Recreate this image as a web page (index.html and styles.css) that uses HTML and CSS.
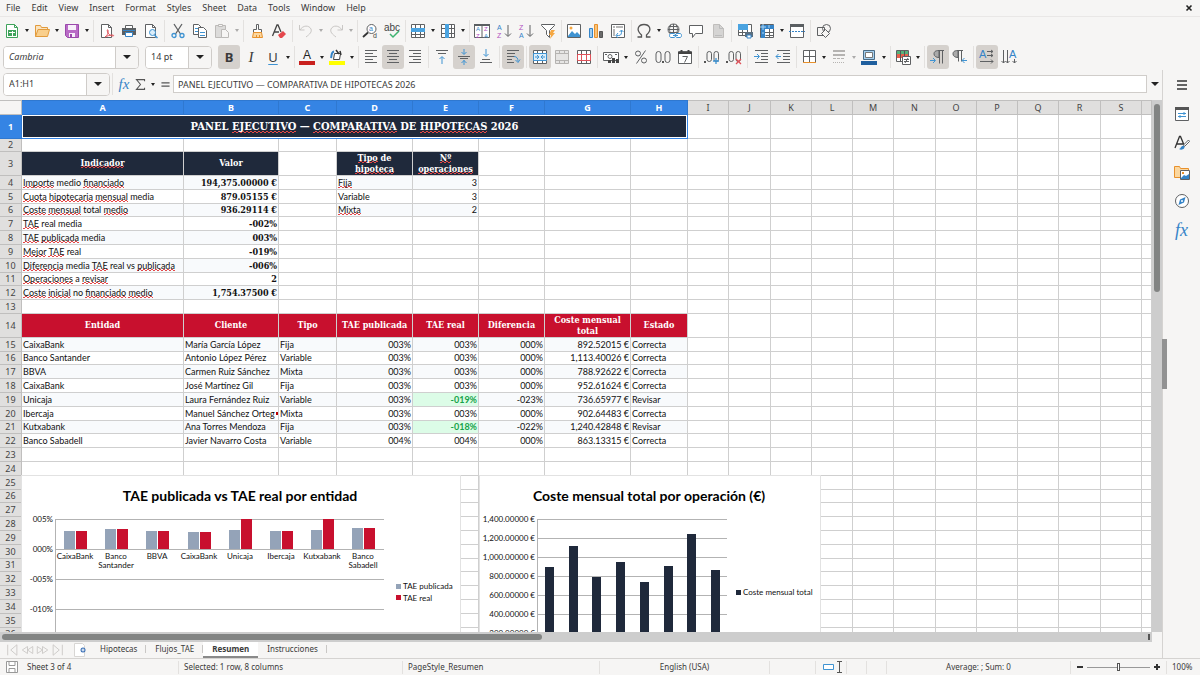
FILE: index.html
```html
<!DOCTYPE html>
<html lang="es">
<head>
<meta charset="utf-8">
<title>Resumen</title>
<link rel="stylesheet" href="styles.css">
</head>
<body>
<nav class="menubar" aria-label="Menu">
  <button>File</button><button>Edit</button><button>View</button><button>Insert</button><button>Format</button><button>Styles</button><button>Sheet</button><button>Data</button><button>Tools</button><button>Window</button><button>Help</button>
  <button class="close" aria-label="Close document"><svg viewBox="0 0 8 8"><path d="M1.5 1.5l5 5M6.5 1.5l-5 5" stroke="#222" stroke-width="1.6"/></svg></button>
</nav>

<div class="toolbar standard" role="toolbar" aria-label="Standard">
  <button class="tb" aria-label="New"><svg viewBox="0 0 16 16"><path class="gr" fill="#fff" d="M2.500 1.500h8l3 3v10h-11z"/><path class="gr" d="M10.500 1.500v3h3"/><path fill="#3fa35b" d="M4 7h8v6H4z"/><path stroke="#fff" d="M5 9.500h6M8.500 8v5"/></svg></button><button class="dd" aria-label="New options"></button>
  <button class="tb" aria-label="Open"><svg viewBox="0 0 16 16"><path fill="#fbe3bd" stroke="#e29b3c" d="M1.500 13.500v-11h5l1 2h6v3"/><path fill="#f9cf8c" stroke="#e29b3c" d="M1.500 13.500l2.500-7h11.500l-2 7z"/></svg></button><button class="dd" aria-label="Open options"></button>
  <button class="tb" aria-label="Save"><svg viewBox="0 0 16 16"><path fill="#b96bc6" stroke="#9a48ab" d="M1.500 1.500h13v13h-11l-2-2z"/><path fill="#f7effa" d="M4 2h8v5H4zM5 10h6v4H5z"/><path fill="#9a48ab" d="M6 11h2v3H6z"/></svg></button><button class="dd" aria-label="Save options"></button>
  <span class="sep"></span>
  <button class="tb" aria-label="Export as PDF"><svg viewBox="0 0 16 16"><path class="k" fill="#fff" d="M2.500 1.500h7l3 3v10h-10z"/><path class="k" d="M9.500 1.500v3h3"/><path class="r" d="M6 14c3-2 3.500-5 3-7-1-1-1 1 0 3 1 2 3 3 5 3 1 0 1-1-1-1-2 0-5 1-7 2"/></svg></button>
  <button class="tb" aria-label="Print"><svg viewBox="0 0 16 16"><path class="k" fill="#fff" d="M4.500 5V2.500h7V5"/><path fill="#5b5f62" d="M1 5h14v7H1z"/><path fill="#fff" stroke="#3584c8" d="M4.500 9.500h7v4h-7z"/><path stroke="#3584c8" d="M2 7.500h12"/></svg></button>
  <button class="tb" aria-label="Print preview"><svg viewBox="0 0 16 16"><path class="k" fill="#fff" d="M2.500 1.500h7l3 3v10h-10z"/><path class="k" d="M9.500 1.500v3h3"/><circle class="b" fill="#dceefa" cx="9.500" cy="9.500" r="3"/><path class="b" stroke-width="1.500" d="M11.500 12l3 3"/></svg></button>
  <span class="sep"></span>
  <button class="tb" aria-label="Cut"><svg viewBox="0 0 16 16"><path class="k" stroke-width="1.300" d="M4 1l6.500 10M12 1L5.500 11"/><circle class="b" stroke-width="1.300" cx="4" cy="12.500" r="2"/><circle class="b" stroke-width="1.300" cx="12" cy="12.500" r="2"/></svg></button>
  <button class="tb" aria-label="Copy"><svg viewBox="0 0 16 16"><path class="k" fill="#fff" d="M1.500 1.500h5l3 3v7h-8z"/><path class="k" fill="#fff" d="M6.500 4.500h5l3 3v7h-8z"/><path class="b" d="M3 5.500h3M3 8.500h3M8 9.500h5M8 12.500h5"/></svg></button>
  <button class="tb" aria-label="Paste"><svg viewBox="0 0 16 16"><path fill="#dcdbda" stroke="#bcbab8" d="M1.500 2.500h10v12h-10z"/><path fill="#f6f5f4" stroke="#bcbab8" d="M4.500 1.500h4v2h-4zM7.500 6.500h4l3 3v5h-7z"/></svg></button><button class="dd off" aria-label="Paste options"></button>
  <span class="sep"></span>
  <button class="tb" aria-label="Clone formatting"><svg viewBox="0 0 16 16"><path class="k" fill="#fff" d="M7.500 1.500h2v5h3v3h-8v-3h3z"/><path fill="#fbd79f" stroke="#e8912c" d="M4.500 9.500h8l1 5h-10z"/><path stroke="#e8912c" d="M7.500 12v2M10.500 12v2"/></svg></button>
  <button class="tb" aria-label="Clear formatting"><svg viewBox="0 0 16 16"><path stroke="#444" stroke-width="1.300" d="M1.500 13L6 2h1l3 7M3 9h5"/><path fill="#e5484d" d="M7 12l5-4 3 3-4 4H9z"/></svg></button>
  <span class="sep"></span>
  <button class="tb" aria-label="Undo"><svg viewBox="0 0 16 16"><path class="g" d="M1.500 2v5h5M2 7c3-5 9-5 11-1 1 3-1 5-5 8"/></svg></button><button class="dd off" aria-label="Undo list"></button>
  <button class="tb" aria-label="Redo"><svg viewBox="0 0 16 16"><path class="g" d="M14.500 2v5h-5M14 7C11 2 5 2 3 6c-1 3 1 5 5 8"/></svg></button><button class="dd off" aria-label="Redo list"></button>
  <span class="sep tight"></span>
  <button class="tb" aria-label="Find and replace"><svg viewBox="0 0 16 16"><circle class="k" fill="#fff" cx="9.500" cy="6" r="4.500"/><path stroke="#333" stroke-width="1.800" d="M1 14l5-4.500"/><text x="7" y="8" class="tx blue" font-size="7">a</text><text x="11" y="15" class="tx" font-size="7">d</text></svg></button>
  <button class="tb" aria-label="Spelling"><svg viewBox="0 0 16 16"><text x="0" y="8" class="tx" font-size="10">abc</text><path stroke="#3db370" stroke-width="1.500" d="M6 11l3 3 6-6"/></svg></button>
  <span class="sep tight"></span>
  <button class="tb" aria-label="Row"><svg viewBox="0 0 16 16"><path class="k" fill="#fff" d="M1.500 1.500h13v13h-13zM1.500 11.500h13M5.500 1.500v13M10.500 1.500v13"/><path fill="#4aa3e0" d="M1 5h14v4H1z"/></svg></button><button class="dd" aria-label="Row options"></button>
  <button class="tb" aria-label="Column"><svg viewBox="0 0 16 16"><path class="k" fill="#fff" d="M1.500 1.500h13v13h-13zM11.500 1.500v13M1.500 5.500h13M1.500 10.500h13"/><path fill="#4aa3e0" d="M5 1h4v14H5z"/></svg></button><button class="dd" aria-label="Column options"></button>
  <span class="sep tight"></span>
  <button class="tb" aria-label="Sort"><svg viewBox="0 0 16 16"><path class="k" fill="#fff" d="M.5 1.500h15v13H.5zM8 2v12"/><path fill="#5b5f62" d="M0 1h16v2H0z"/><text x="2" y="8" class="tx blue" font-size="6">A</text><text x="2" y="15" class="tx purple" font-size="6">Z</text><text x="10" y="8" class="tx purple" font-size="6">Z</text><text x="10" y="15" class="tx blue" font-size="6">A</text></svg></button>
  <button class="tb" aria-label="Sort ascending"><svg viewBox="0 0 16 16"><text x="1" y="7" class="tx blue" font-size="7">A</text><text x="1" y="15" class="tx purple" font-size="7">Z</text><path class="k" d="M12 2v11M9 10.500l3 3 3-3"/></svg></button>
  <button class="tb" aria-label="Sort descending"><svg viewBox="0 0 16 16"><text x="1" y="7" class="tx purple" font-size="7">Z</text><text x="1" y="15" class="tx blue" font-size="7">A</text><path class="k" d="M12 2v11M9 10.500l3 3 3-3"/></svg></button>
  <button class="tb" aria-label="AutoFilter"><svg viewBox="0 0 16 16"><path class="k" fill="#fff" d="M1.500 1.500h13v1l-5 5v7l-3-3v-4l-5-5z"/><path fill="#f5a742" d="M11 7h4l-2 3h2l-5 6 1-4H9z"/></svg></button>
  <span class="sep tight"></span>
  <button class="tb" aria-label="Insert image"><svg viewBox="0 0 16 16"><path class="k" fill="#fff" d="M1.500 1.500h13v13h-13z"/><path fill="#3f93d2" d="M2 13l4-5 3 3 2-2 3 3v2H2z"/><circle fill="#f5a742" cx="5" cy="5" r="1.500"/></svg></button>
  <button class="tb" aria-label="Insert chart"><svg viewBox="0 0 16 16"><path fill="#9fcdf0" stroke="#3584c8" d="M1.500 5.500h3v9h-3z"/><path fill="#f8c37a" stroke="#e8912c" d="M6.500 1.500h3v13h-3z"/><path fill="#6b6b6b" stroke="#555" d="M11.500 8.500h3v6h-3z"/></svg></button>
  <button class="tb" aria-label="Pivot table"><svg viewBox="0 0 16 16"><path class="k" fill="#fff" d="M1.500 1.500h13v13h-13z"/><path fill="#b7b7b7" d="M3 3h2v2H3zM6 3h7v2H6zM3 6h2v7H3z"/><path class="b" d="M6.500 12.500h2c3 0 3-2 3-5M9.500 9l2-2 2 2M8 10l-2 2.500L8 15"/></svg></button>
  <span class="sep tight"></span>
  <button class="tb" aria-label="Special character"><svg viewBox="0 0 16 16"><path stroke="#555" stroke-width="1.300" d="M1.500 14h4v-2C-1 6 3 1.500 8 1.500s9 4.500 2.500 10.500v2h4"/></svg></button><button class="dd" aria-label="Special character options"></button>
  <button class="tb" aria-label="Insert hyperlink"><svg viewBox="0 0 16 16"><circle class="k" cx="7.500" cy="6.500" r="5.500"/><path class="k" d="M2 6.500h11M7.500 1v11M3 3.500h9M3 9.500h9M5 1.500c-2 4-2 6 0 10M10 1.500c2 4 2 6 0 10"/><path class="b" fill="#fff" d="M5 10.500h3c2 0 2 4 0 4H5c-2 0-2-4 0-4zM11 10.500h3c2 0 2 4 0 4h-3c-2 0-2-4 0-4zM7 12.500h5"/></svg></button>
  <button class="tb" aria-label="Insert comment"><svg viewBox="0 0 16 16"><path class="k" fill="#fff" d="M1.500 2.500h13v8h-7l-3 4v-4h-3z"/></svg></button>
  <button class="tb" aria-label="Headers and footers"><svg viewBox="0 0 16 16"><path fill="#d5d4d3" stroke="#c0bebc" d="M3.500 1.500h6l4 4v9h-10z"/><path stroke="#bbb" d="M5 12.500h7M9.500 1.500v4h4"/></svg></button>
  <span class="sep"></span>
  <button class="tb" aria-label="Define print area"><svg viewBox="0 0 16 16"><path class="k" fill="#fff" d="M1.500 1.500h13v11h-13zM1.500 9.500h13M5.500 1.500v11M10.500 1.500v11"/><path fill="#4aa3e0" d="M1 1h10v6H1z"/><path fill="#5b6f80" d="M8 9h8v5H8z"/><path fill="#fff" stroke="#3584c8" d="M10 12h4v3h-4z"/></svg></button>
  <button class="tb" aria-label="Freeze rows and columns"><svg viewBox="0 0 16 16"><path class="k" fill="#fff" d="M1.500 1.500h13v13h-13zM1.500 9.500h13M10.500 1.500v13M6.500 12.500h8"/><path fill="#3584c8" d="M2 2h13v4H6v9H2z"/><path stroke="#a8d3f3" d="M4 1v6M1 4h6M10 2v3M3 10h2"/></svg></button><button class="dd" aria-label="Freeze options"></button>
  <button class="tb" aria-label="Split window"><svg viewBox="0 0 16 16"><path class="k" fill="#fff" d="M1.500 1.500h13v13h-13z"/><path fill="#5b5f62" d="M1 1h14v3H1z"/><path stroke="#3584c8" stroke-dasharray="2 1" d="M0 8.500h16"/></svg></button>
  <span class="sep"></span>
  <button class="tb" aria-label="Show draw functions"><svg viewBox="0 0 16 16"><path class="k" d="M1.500 4.500h7v8h-7z"/><circle class="k" cx="10.500" cy="5.500" r="4"/><path class="k" fill="#f6f5f4" d="M9.500 6.500l4 4-4 4-4-4z"/></svg></button>
</div>

<div class="toolbar formatting" role="toolbar" aria-label="Formatting">
  <div class="combo fontname"><input aria-label="Font name" value="Cambria"><button aria-label="Font list"></button></div>
  <div class="combo fontsize"><input aria-label="Font size" value="14 pt"><button aria-label="Font size list"></button></div>
  <button class="tb on letter bold" aria-label="Bold">B</button>
  <button class="tb letter ital" aria-label="Italic">I</button>
  <button class="tb letter under" aria-label="Underline">U</button><button class="dd" aria-label="Underline options"></button>
  <span class="sep tight"></span>
  <button class="tb" aria-label="Font color"><svg viewBox="0 0 16 16"><text x="4" y="10" class="tx dark" font-size="12">A</text><path fill="#c9211e" d="M0 12h16v4H0z"/></svg></button><button class="dd" aria-label="Font color options"></button>
  <button class="tb" aria-label="Highlighting"><svg viewBox="0 0 16 16"><path fill="#ff0" d="M0 12h16v4H0z"/><path stroke="#444" fill="#fff" d="M5.500 4.500h6l-1 6h-6z"/><path stroke="#333" stroke-width="1.500" d="M7 1l3 4M11 2l1 4"/><path stroke="#3584c8" stroke-width="2" d="M5 2.500C2 3 3 6 2 9"/></svg></button><button class="dd" aria-label="Highlighting options"></button>
  <span class="sep tight"></span>
  <button class="tb" aria-label="Align left"><svg viewBox="0 0 16 16"><path class="k" d="M2 1.500h12M2 4.500h8M2 7.500h12M2 10.500h8M2 13.500h12"/></svg></button>
  <button class="tb on" aria-label="Center"><svg viewBox="0 0 16 16"><path class="k" d="M2 1.500h12M4 4.500h8M2 7.500h12M4 10.500h8M2 13.500h12"/></svg></button>
  <button class="tb" aria-label="Align right"><svg viewBox="0 0 16 16"><path class="k" d="M2 1.500h12M6 4.500h8M2 7.500h12M6 10.500h8M2 13.500h12"/></svg></button>
  <span class="sep"></span>
  <button class="tb" aria-label="Align top"><svg viewBox="0 0 16 16"><path class="k" d="M2 1.500h12M4 4.500h8"/><path class="b" d="M8 15V8M5.500 10L8 7.500l2.500 2.500"/></svg></button>
  <button class="tb on" aria-label="Center vertically"><svg viewBox="0 0 16 16"><path class="k" d="M2 7.500h12M4 9.500h8"/><path class="b" d="M8 0v5M5.500 3L8 5.500 10.500 3M8 16v-5M5.500 14L8 11.500l2.500 2.500"/></svg></button>
  <button class="tb" aria-label="Align bottom"><svg viewBox="0 0 16 16"><path class="k" d="M4 10.500h8M2 13.500h12"/><path class="b" d="M8 0v7M5.500 5L8 7.500 10.500 5"/></svg></button>
  <span class="sep"></span>
  <button class="tb on" aria-label="Wrap text"><svg viewBox="0 0 16 16"><path class="k" d="M2 1.500h12M2 4.500h8M2 7.500h8M2 10.500h5M2 13.500h7"/><path class="b" d="M9 7.500c3 0 4 2 4 5M10.500 11l2.500 2.500 2-3"/></svg></button>
  <span class="sep"></span>
  <button class="tb on" aria-label="Merge and center"><svg viewBox="0 0 16 16"><path class="k" fill="#fff" d="M1.500 1.500h13v13h-13zM5.500 1.500v3M10.500 1.500v3M5.500 11.500v3M10.500 11.500v3"/><path class="b" fill="#dceefa" d="M1.500 4.500h13v7h-13z"/><path class="b" d="M3 8h4M9 8h4M5 6l2 2-2 2M11 6L9 8l2 2"/></svg></button>
  <button class="tb" aria-label="Merge cells"><svg viewBox="0 0 16 16"><path stroke="#b5b3b1" fill="#e6e5e4" d="M1.500 1.500h13v13h-13zM1.500 4.500h13M1.500 11.500h13M5.500 1.500v3M10.500 1.500v3M5.500 11.500v3M10.500 11.500v3"/></svg></button>
  <button class="tb" aria-label="Unmerge cells"><svg viewBox="0 0 16 16"><path class="k" fill="#fff" d="M1.500 1.500h13v13h-13zM5.500 1.500v13M10.500 1.500v13"/><path class="r" d="M1.500 5.500h13v6h-13zM5.500 5.500v6M10.500 5.500v6"/></svg></button>
  <span class="sep"></span>
  <button class="tb" aria-label="Format as currency"><svg viewBox="0 0 16 16"><path class="k" fill="#fff" d="M.5 3.500h15v8H.5z"/><circle class="k" cx="7" cy="7.500" r="2"/><path fill="#444" d="M5 11h3v3H5zM9 9h3v5H9zM13 10h3v4h-3z"/><path class="k" d="M2 5.500h2M12 5.500h2"/></svg></button><button class="dd" aria-label="Currency options"></button>
  <button class="tb" aria-label="Format as percent"><svg viewBox="0 0 16 16"><circle class="k" cx="5" cy="4.500" r="2.500"/><circle class="k" cx="11" cy="11.500" r="2.500"/><path class="k" d="M12.500 1.500l-9 13"/></svg></button>
  <button class="tb" aria-label="Format as number"><svg viewBox="0 0 16 16"><rect class="k" x="1" y="2.500" width="5" height="11" rx="2.500"/><rect class="k" x="10" y="2.500" width="5" height="11" rx="2.500"/><path fill="#555" d="M7 12h2v2H7z"/></svg></button>
  <button class="tb" aria-label="Format as date"><svg viewBox="0 0 16 16"><path class="k" fill="#fff" d="M1.500 2.500h13v12h-13z"/><path stroke="#444" stroke-width="2" d="M1 4h14M4.500 1v2M11.500 1v2"/><path class="k" d="M5.500 7.500h5l-3 6"/></svg></button>
  <span class="sep"></span>
  <button class="tb" aria-label="Add decimal place"><svg viewBox="0 0 16 16"><rect class="k" x="3" y="2.500" width="4.500" height="10" rx="2.200"/><rect class="k" x="10" y="2.500" width="4.500" height="10" rx="2.200"/><path fill="#555" d="M0 12h2v2H0z"/><path class="b" stroke-width="1.300" d="M12 9v6M9 12h6"/></svg></button>
  <button class="tb" aria-label="Delete decimal place"><svg viewBox="0 0 16 16"><rect class="k" x="3" y="2.500" width="4.500" height="10" rx="2.200"/><rect class="k" x="10" y="2.500" width="4.500" height="10" rx="2.200"/><path fill="#555" d="M0 12h2v2H0z"/><path class="r" stroke-width="1.300" d="M10 10l5 5M15 10l-5 5"/></svg></button>
  <span class="sep"></span>
  <button class="tb" aria-label="Increase indent"><svg viewBox="0 0 16 16"><path class="k" d="M2 1.500h13M8 4.500h7M8 7.500h7M8 10.500h7M2 13.500h13"/><path class="b" d="M1 7.500h5M4 5l2.500 2.500L4 10"/></svg></button>
  <button class="tb" aria-label="Decrease indent"><svg viewBox="0 0 16 16"><path class="k" d="M2 1.500h13M8 4.500h7M8 7.500h7M8 10.500h7M2 13.500h13"/><path class="b" d="M1 7.500h5M3.500 5L1 7.500 3.500 10"/></svg></button>
  <span class="sep tight"></span>
  <button class="tb" aria-label="Borders"><svg viewBox="0 0 16 16"><path class="k" fill="#fff" d="M2.500 1.500h12v12h-12zM8.500 1.500v12M2.500 7.500h12"/><path stroke="#e8912c" d="M2 13.500h13"/></svg></button><button class="dd" aria-label="Borders options"></button>
  <button class="tb" aria-label="Border style"><svg viewBox="0 0 16 16"><path stroke="#b5b3b1" stroke-width="2" d="M2 2h12M2 6h12"/><path stroke="#b5b3b1" d="M2 9.500h12" stroke-dasharray="3 1"/><path stroke="#b5b3b1" d="M2 13.500h12" stroke-dasharray="1 1"/></svg></button><button class="dd off" aria-label="Border style options"></button>
  <button class="tb" aria-label="Border color"><svg viewBox="0 0 16 16"><path fill="#a5d0f0" stroke="#4a6b85" d="M2.500 1.500h11v9h-11z"/><path fill="#fff" stroke="#777" d="M4.500 3.500h7v5h-7z"/><path fill="#1f5f9e" d="M0 12h16v4H0z"/></svg></button><button class="dd" aria-label="Border color options"></button>
  <span class="sep tight"></span>
  <button class="tb" aria-label="Conditional formatting"><svg viewBox="0 0 16 16"><path class="k" fill="#fff" d="M1.500 1.500h12v11h-12z"/><path fill="#55b37a" d="M2 2h11v3H2z"/><path fill="#e8604c" d="M2 5h11v4H2z"/><path stroke="#555" d="M5.500 2v10M9.500 2v10"/><path class="k" fill="#fff" d="M7.500 7.500h8v8h-8z"/><path class="k" d="M9 10.500h5M9 12.500h5M13 9l-3 5"/></svg></button><button class="dd" aria-label="Conditional formatting options"></button>
  <span class="sep"></span>
  <button class="tb on" aria-label="Left to right"><svg viewBox="0 0 16 16"><path class="k" fill="#aaa" d="M9 1.500C5 1.500 4 3 4 5s2 3.500 5 3.500z"/><path class="k" d="M9 1.500h5M9.500 1.500v13M12.500 1.500v13"/><path class="b" d="M0 11.500h5M3 9l2.500 2.500L3 14"/></svg></button>
  <button class="tb" aria-label="Right to left"><svg viewBox="0 0 16 16"><path class="k" fill="#aaa" d="M6 1.500C2 1.500 1 3 1 5s2 3.500 5 3.500z"/><path class="k" d="M6 1.500h5M6.500 1.500v11M9.500 1.500v11"/><path class="b" d="M10 11.500h5M12.500 9L10 11.500l2.500 2.500"/></svg></button>
  <span class="sep"></span>
  <button class="tb on" aria-label="Text direction horizontal"><svg viewBox="0 0 16 16"><text x="0" y="9" class="tx blue" font-size="11">A</text><path class="k" d="M8 2.500h6M12 1l2 1.500L12 4M8 6.500h6M12 5l2 1.500L12 8M1 12.500h13M12 10.500l2 2-2 2"/></svg></button>
  <button class="tb" aria-label="Text direction vertical"><svg viewBox="0 0 16 16"><text x="8" y="9" class="tx blue" font-size="11">A</text><path class="k" d="M2.500 1v13M.5 12l2 2 2-2M6.500 1v13M4.500 12l2 2 2-2M13.500 10v4M11.500 12l2 2 2-2"/></svg></button>
</div>

<main class="work">
  <section class="doc">
    <div class="formulabar">
      <div class="combo namebox"><input aria-label="Name box" value="A1:H1"><button aria-label="Name list"></button></div>
      <span class="sep"></span>
      <button class="fb fx" aria-label="Function wizard">fx</button>
      <button class="fb" aria-label="Sum"><svg viewBox="0 0 16 16"><path stroke="#555" stroke-width="1.300" d="M13 4V2H3l5 6-5 6h10v-2"/></svg></button><button class="dd" aria-label="Sum options"></button>
      <button class="fb" aria-label="Formula"><svg viewBox="0 0 16 16"><path stroke="#555" stroke-width="1.500" d="M3 6h10M3 10h10"/></svg></button>
      <input class="formula" aria-label="Formula input" value="PANEL EJECUTIVO — COMPARATIVA DE HIPOTECAS 2026">
      <button class="expand" aria-label="Expand formula bar"></button>
    </div>
    <div class="gridwrap">
      <div class="sheet">
        <table id="grid"></table>
        <svg class="chart first" id="chartTae" width="438" height="320"></svg>
        <svg class="chart second" id="chartCoste" width="340" height="320"></svg>
      </div>
      <div class="vscroll"><div class="thumb"></div></div>
    </div>
    <div class="hscroll"><div class="thumb"></div><div class="endmark"></div></div>
    <div class="tabs">
      <div class="tabnav">
        <button aria-label="First sheet"><svg viewBox="0 0 16 16"><path class="g" d="M2.500 2v12M13 2L6 8l7 6V2z"/></svg></button>
        <button aria-label="Previous sheet"><svg viewBox="0 0 16 16"><path class="g" d="M8 4L2 8l6 4V4zM14 4L8 8l6 4V4z"/></svg></button>
        <button aria-label="Next sheet"><svg viewBox="0 0 16 16"><path class="g" d="M2 4l6 4-6 4V4zM8 4l6 4-6 4V4z"/></svg></button>
        <button aria-label="Last sheet"><svg viewBox="0 0 16 16"><path class="g" d="M13.500 2v12M3 2l7 6-7 6V2z"/></svg></button>
      </div>
      <button class="addtab" aria-label="Add sheet"><svg viewBox="0 0 14 14"><path fill="#fff" stroke="#d8d6d4" d="M1.500.5h8l2 2v11h-10z"/><circle cx="10" cy="7" r="2.500" fill="#3a6fb5"/><path stroke="#fff" d="M10 5.500v3M8.500 7h3"/></svg></button>
      <button class="tab">Hipotecas</button><button class="tab">Flujos_TAE</button><button class="tab active">Resumen</button><button class="tab">Instrucciones</button>
    </div>
  </section>
  <aside class="sidebar">
    <button aria-label="Sidebar settings"><svg viewBox="0 0 16 16"><path stroke="#333" stroke-width="1.500" d="M3 4h10M3 8h10M3 12h10"/></svg></button>
    <button aria-label="Properties"><svg viewBox="0 0 16 16"><path class="k" fill="#fff" d="M1.500 1.500h13v13h-13z"/><path fill="#555" d="M1 1h14v3H1z"/><path class="b" d="M4 7.500h8M4 10.500h8M10 6v3M6 9v3"/></svg></button>
    <button aria-label="Styles"><svg viewBox="0 0 16 16"><path stroke="#333" stroke-width="1.300" d="M1 13L5.500 1.500h1L10 10M2.500 9H9"/><path class="k" fill="#fff" d="M14.500 5l-5 5 1 1.500 5-5z"/><path fill="#3584c8" d="M5 14c2 0 2-4 5-3 2 2-2 5-5 3z"/></svg></button>
    <button aria-label="Gallery"><svg viewBox="0 0 16 16"><path fill="#fbd79f" stroke="#e8912c" d="M.5 13.500v-11h5l1 2h8v9z"/><path class="k" fill="#fff" d="M6.500 6.500h9v9h-9z"/><path fill="#3584c8" d="M7 14l3-3 2 1 3-2v5H7z"/><path fill="#e8912c" d="M8 8h2v2H8z"/></svg></button>
    <button aria-label="Navigator"><svg viewBox="0 0 16 16"><circle class="k" fill="#fff" cx="8" cy="8" r="6.500"/><path fill="#3584c8" d="M11.500 4L10 9.500 4.500 12 6 6.500z"/><circle fill="#fff" cx="8" cy="8" r="1"/></svg></button>
    <button class="fx" aria-label="Functions">fx</button>
    <span class="grip"></span>
  </aside>
</main>

<footer class="status">
  <span class="saveicon"><svg viewBox="0 0 14 14"><path stroke="#999" fill="#fff" d="M1.500 1.500h11v11h-11zM4 1.500h6v4H4zM4 8.500h6v4H4z"/></svg></span>
  <span>Sheet 3 of 4</span>
  <span>Selected: 1 row, 8 columns</span>
  <span>PageStyle_Resumen</span>
  <span class="mid">English (USA)</span>
  <span></span>
  <span class="mode"><svg viewBox="0 0 22 14"><path stroke="#3f93d2" fill="#fff" d="M2.500 4.500h10v5h-10z"/><path stroke="#555" d="M16 1.500h5M16 12.500h5M18.500 1.500v11"/></svg></span>
  <span></span><span></span>
  <span class="mid">Average: ; Sum: 0</span>
  <span class="zoom"><button aria-label="Zoom out"><i class="bar"></i></button><input type="range" min="0" max="100" value="50" aria-label="Zoom"><button aria-label="Zoom in"><i class="bar"></i><i class="bar up"></i></button></span>
  <span class="pct">100%</span>
</footer>
<script src="sheet.js"></script>
</body>
</html>
```

FILE: styles.css
```css
* { box-sizing: border-box; }
body {
  margin: 0;
  height: 100vh;
  display: flex;
  flex-direction: column;
  overflow: hidden;
  background: #f6f5f4;
  color: #3a3a3a;
  font: 9px/12px "Noto Sans", "Open Sans", sans-serif;
}
button { border: 0; padding: 0; margin: 0; background: none; font: inherit; color: inherit; }
input { font: inherit; color: inherit; border: 0; margin: 0; min-width: 0; outline: 0; }
svg { display: block; fill: none; overflow: visible; }
.k { stroke: #5f6163; }
.b { stroke: #3f93d2; }
.r { stroke: #e0525a; }
.gr { stroke: #3fa35b; }
.g { stroke: #c9c7c5; }
.tx { font-family: "Liberation Sans", sans-serif; fill: #444; }
.dark { fill: #222; }
.blue { fill: #3584c8; }
.purple { fill: #b14fc0; }

.menubar { display: flex; align-items: center; height: 17px; padding-left: 6px; gap: 11px; border-bottom: 1px solid #e9e7e6; flex: none; }
.close { margin-left: auto; margin-right: 7px; width: 8px; }

.toolbar { display: flex; align-items: center; flex: none; }
.standard { padding-left: 1px; height: 27px; }
.formatting { padding-left: 3px; height: 26px; }
.tb { width: 22px; height: 24px; display: flex; align-items: center; justify-content: center; border-radius: 3px; flex: none; }
.tb svg { width: 16px; height: 16px; }
.on { background: #d5d1cd; }
.dd { width: 8px; height: 24px; display: flex; align-items: center; justify-content: center; flex: none; }
.dd::after, .combo button::after, .expand::after { content: ""; border: 2px solid transparent; border-top: 3px solid #222; border-bottom: 0; }
.combo button::after, .expand::after { border-width: 4px 4px 0; }
.off { opacity: .35; }
.sep { width: 1px; height: 22px; margin: 0 2px; background: #e3e1df; flex: none; }
.tight { margin-right: 1px; }
.letter { font-size: 13px; line-height: 16px; }
.bold { font-weight: 700; }
.ital { font-family: "Liberation Serif", serif; font-style: italic; font-size: 15px; }
.under { text-decoration: underline; text-decoration-color: #3f93d2; text-underline-offset: 2px; }

.combo { display: flex; height: 23px; border: 1px solid #cfccc9; border-radius: 4px; background: #fff; overflow: hidden; flex: none; }
.combo input { flex: 1; width: 0; padding: 0 5px; background: #fff; }
.combo button { width: 23px; display: flex; align-items: center; justify-content: center; background: #f6f5f4; border-left: 1px solid #cfccc9; }
.fontname { width: 136px; margin-right: 6px; }
.fontname input { font-style: italic; }
.fontsize { width: 67px; margin-right: 6px; }
.namebox { width: 107px; }

.work { flex: 1; min-height: 0; display: flex; }
.doc { flex: 1; min-width: 0; display: flex; flex-direction: column; }
.formulabar { display: flex; align-items: center; height: 30px; padding: 0 0 2px 3px; flex: none; }
.fb { width: 15px; display: flex; align-items: center; justify-content: center; flex: none; }
.fb svg { width: 13px; height: 13px; }
.fx { font: italic 15px/16px "Liberation Serif", serif; color: #3584c8; }
.formulabar .fx { width: 18px; }
.formulabar .dd { width: 10px; }
.formula { flex: 1; height: 18px; border: 1px solid #d0cdca; background: #fff; padding: 0 4px; }
.expand { width: 15px; display: flex; justify-content: center; }

.gridwrap { flex: 1; min-height: 0; display: flex; }
.sheet { position: relative; flex: 1; min-width: 0; overflow: hidden; background: #fff; }
table { width: 100%; table-layout: fixed; border-collapse: separate; border-spacing: 0; font-family: Lato, sans-serif; color: #111; }
td, th { padding: 0 1px; border-right: 1px solid #cfcfcf; border-bottom: 1px solid #cfcfcf; line-height: 12px; height: 14px; white-space: nowrap; overflow: hidden; font-weight: 400; text-align: left; }
.short td, .short th { height: 13px; }
.tall td, .tall th { height: 24px; }
thead th, tbody th { background: #e0dfde; text-align: center; color: #444; font-family: "Noto Sans", sans-serif; border-color: #c0bfbe; }
thead th { border-top: 1px solid #c0bfbe; height: 15px; }
thead th.corner { background: #f6f5f4; }
thead th.sel, tbody th.sel { background: #3584e4; color: #fff; font-weight: 700; border-color: #2f78d0; }
td.title { background: #1f293b; color: #fff; text-align: center; font-family: "DejaVu Serif Condensed", "DejaVu Serif", serif; font-weight: 700; font-size: 11px; border-color: #3584e4; box-shadow: inset 0 0 0 1px #fff; }
td.navy, td.red { color: #fff; text-align: center; white-space: normal; line-height: 11px; font-family: "DejaVu Serif Condensed", "DejaVu Serif", serif; font-weight: 700; font-size: 9px; }
td.navy { background: #1f293b; }
td.red { background: #c8102e; }
td.band { background: #f8fafc; }
td.num { text-align: right; }
td.key { font-family: "DejaVu Serif Condensed", "DejaVu Serif", serif; font-weight: 700; font-size: 9px; }
td.good { background: #dcfce7; color: #16a34a; font-weight: 700; }
td.more { background-image: linear-gradient(#b00, #b00); background-size: 2px 3px; background-position: right center; background-repeat: no-repeat; }
/* two interleaved rows of dashes draw the spell-check wave */
.sp {
  background-image: linear-gradient(90deg, #e54848 50%, transparent 50%), linear-gradient(90deg, transparent 50%, #e54848 50%);
  background-size: 4px 1px, 4px 1px;
  background-position: left bottom, left bottom 1px;
  background-repeat: repeat-x;
}

.chart { position: absolute; top: 376px; background: #fff; outline: 1px solid #e2e2e2; font-family: Lato, sans-serif; font-size: 8px; }
.chart text { fill: #111; }
.chart .heading { font-size: 14px; font-weight: 700; fill: #000; }
.first { left: 22px; }
.second { left: 480px; }

.vscroll { width: 10px; background: #cdcdcd; padding: 4px 2px; flex: none; }
.vscroll .thumb { height: 188px; border-radius: 3px; background: #828483; }
.hscroll { height: 10px; margin-right: 10px; background: #cdcdcd; padding: 2px; display: flex; flex: none; }
.hscroll .thumb { width: 47%; height: 6px; border-radius: 3px; background: #828483; }
.endmark { width: 2px; margin-left: auto; background: #555; }

.tabs { display: flex; align-items: center; height: 16px; flex: none; font-size: 8px; }
.tabnav { display: flex; padding-left: 5px; width: 73px; }
.tabnav svg { width: 15px; height: 14px; }
.addtab { width: 18px; }
.addtab svg { width: 14px; height: 14px; }
.tab { height: 16px; padding: 0 9px; border-bottom: 2px solid transparent; }
.tab:not(.active) { background: linear-gradient(#c9c7c5, #c9c7c5) right center / 1px 8px no-repeat; }
.tab.active { background: #fff; font-weight: 700; border-bottom-color: #8a8a8a; }

.sidebar { width: 38px; border-left: 1px solid #d5d3d1; display: flex; flex-direction: column; align-items: center; gap: 13px; padding-top: 7px; position: relative; flex: none; }
.sidebar svg { width: 16px; height: 16px; }
.sidebar .fx { font-size: 18px; }
.grip { position: absolute; left: -1px; top: 269px; width: 5px; height: 50px; background: #929292; }

.status { display: grid; grid-template-columns: 22px 157fr 224fr 197fr 170fr 46px 31px 20px 20px 184fr 96px 33px; align-items: center; height: 17px; border-top: 1px solid #d5d3d1; flex: none; font-size: 8px; }
.status > span { height: 13px; padding: 0 5px; border-right: 1px solid #e3e1df; display: flex; align-items: center; white-space: nowrap; }
.status > .saveicon, .status > .pct { border: 0; }
.status > .mid { justify-content: center; }
.mode svg { width: 22px; height: 14px; }
.saveicon svg { width: 14px; height: 14px; flex: none; }
.zoom button { width: 8px; height: 12px; position: relative; flex: none; }
.zoom .bar { position: absolute; left: 1px; top: 5px; width: 6px; height: 2px; background: #333; }
.zoom .up { transform: rotate(90deg); }
.zoom input { appearance: none; flex: 1; width: 0; height: 12px; margin: 0 3px; background: linear-gradient(#999, #999) center / 100% 1px no-repeat; }
.zoom input::-webkit-slider-thumb { appearance: none; width: 3px; height: 8px; border: 1px solid #555; background: #fff; }
```

FILE: sheet.js
```js
const widths = [22, 162, 95, 58, 76, 66, 66, 86, 57, 41, 42, 41, 41, 41, 42, 41, 41, 41, 42, 41];
const letters = 'ABCDEFGHIJKLMNOPQRS'.split('');
const cells = {};
const set = (ref, html, cls = '') => { cells[ref] = { html, cls }; };

set('A3', '[Indicador]', 'navy');
set('B3', 'Valor', 'navy');
set('D3', '[Tipo] de [hipoteca]', 'navy');
set('E3', '[Nº] [operaciones]', 'navy');

[
  ['[Importe] medio [financiado]', '194,375.00000 €'],
  ['[Cuota] [hipotecaria] [mensual] media', '879.05155 €'],
  ['[Coste] [mensual] total [medio]', '936.29114 €'],
  ['[TAE] real media', '-002%'],
  ['[TAE] [publicada] media', '003%'],
  ['[Mejor] [TAE] real', '-019%'],
  ['[Diferencia] media [TAE] real vs [publicada]', '-006%'],
  ['[Operaciones] a [revisar]', '2'],
  ['[Coste] [inicial] no [financiado] [medio]', '1,754.37500 €'],
].forEach(([name, value], i) => {
  const band = i % 2 ? '' : ' band';
  set('A' + (4 + i), name, band);
  set('B' + (4 + i), value, 'num key' + band);
});

[['[Fija]', 3], ['Variable', 3], ['[Mixta]', 2]].forEach(([name, n], i) => {
  const band = i % 2 ? '' : ' band';
  set('D' + (4 + i), name, band);
  set('E' + (4 + i), n, 'num' + band);
});

['Entidad', 'Cliente', 'Tipo', 'TAE publicada', 'TAE real', 'Diferencia', 'Coste mensual total', 'Estado']
  .forEach((name, i) => set(letters[i] + 14, name, 'red'));

[
  ['CaixaBank', 'María García López', 'Fija', '003%', '003%', '000%', '892.52015 €', 'Correcta'],
  ['Banco Santander', 'Antonio López Pérez', 'Variable', '003%', '003%', '000%', '1,113.40026 €', 'Correcta'],
  ['BBVA', 'Carmen Ruiz Sánchez', 'Mixta', '003%', '003%', '000%', '788.92622 €', 'Correcta'],
  ['CaixaBank', 'José Martínez Gil', 'Fija', '003%', '003%', '000%', '952.61624 €', 'Correcta'],
  ['Unicaja', 'Laura Fernández Ruiz', 'Variable', '003%', '-019%', '-023%', '736.65977 €', 'Revisar'],
  ['Ibercaja', 'Manuel Sánchez Orteg', 'Mixta', '003%', '003%', '000%', '902.64483 €', 'Correcta'],
  ['Kutxabank', 'Ana Torres Mendoza', 'Fija', '003%', '-018%', '-022%', '1,240.42848 €', 'Revisar'],
  ['Banco Sabadell', 'Javier Navarro Costa', 'Variable', '004%', '004%', '000%', '863.13315 €', 'Correcta'],
].forEach((row, i) => row.forEach((value, c) => {
  let cls = i % 2 ? '' : 'band';
  if (c > 2 && c < 7) cls += ' num';
  if (c === 4 && value[0] === '-') cls = 'num good';
  if (c === 1 && i === 5) cls += ' more';
  set(letters[c] + (15 + i), value, cls);
}));

const mark = (s) => String(s).replace(/\[(.+?)\]/g, '<span class="sp">$1</span>');

let html = '<colgroup>' + widths.map((w) => `<col style="width:${w}px">`).join('') + '<col></colgroup>';
html += '<thead><tr><th class="corner"></th>' +
  letters.map((l, i) => `<th class="${i < 8 ? 'sel' : ''}">${l}</th>`).join('') + '<th></th></tr></thead><tbody>';
for (let r = 1; r <= 36; r++) {
  const size = [1, 3, 14].includes(r) ? 'tall' : r === 2 || r % 5 === 1 ? 'short' : '';
  html += `<tr class="${size}"><th class="${r === 1 ? 'sel' : ''}">${r}</th>`;
  letters.forEach((l, i) => {
    if (r === 1 && i < 8) {
      if (i === 0) html += `<td class="title" colspan="8">${mark('PANEL [EJECUTIVO] — [COMPARATIVA] DE [HIPOTECAS] 2026')}</td>`;
      return;
    }
    const cell = cells[l + r];
    html += cell ? `<td class="${cell.cls}">${mark(cell.html)}</td>` : '<td></td>';
  });
  html += '<td></td></tr>';
}
document.getElementById('grid').innerHTML = html + '</tbody>';

const line = (x1, y, x2) => `<path d="M${x1} ${y}.5H${x2}" stroke="#b3b3b3"/>`;
const rect = (x, y, w, h, fill) => `<rect x="${x}" y="${y}" width="${w}" height="${h}" fill="${fill}"/>`;
const text = (x, y, s, anchor = 'middle', cls = '') => `<text x="${x}" y="${y}" text-anchor="${anchor}" class="${cls}">${s}</text>`;

let tae = text(218, 25, 'TAE publicada vs TAE real por entidad', 'middle', 'heading');
['005%', '000%', '-005%', '-010%'].forEach((s, i) => {
  tae += line(33, 43 + i * 30, 362) + text(31, 46 + i * 30, s, 'end');
});
tae += '<path d="M33.500 43V320" stroke="#b3b3b3"/>';
[
  ['CaixaBank', 18, 18], ['Banco|Santander', 20, 20], ['BBVA', 18, 18], ['CaixaBank', 17, 17],
  ['Unicaja', 19, 30], ['Ibercaja', 18, 18], ['Kutxabank', 19, 30], ['Banco|Sabadell', 21, 21],
].forEach(([name, a, b], i) => {
  const x = 42 + Math.round(i * 41.2);
  tae += rect(x, 73 - a, 11, a, '#94a3b8') + rect(x + 12, 73 - b, 11, b, '#c8102e');
  name.split('|').forEach((part, n) => { tae += text(x + 11, 83 + n * 9, part); });
});
tae += rect(374, 108, 5, 5, '#94a3b8') + text(381, 113, 'TAE publicada', 'start');
tae += rect(374, 119, 5, 5, '#c8102e') + text(381, 125, 'TAE real', 'start');
document.getElementById('chartTae').innerHTML = tae;

let cost = text(169, 25, 'Coste mensual total por operación (€)', 'middle', 'heading');
['1,400', '1,200', '1,000', '800', '600', '400', '200'].forEach((s, i) => {
  cost += line(57, 43 + i * 19, 247) + text(55, 46 + i * 19, s + '.00000 €', 'end');
});
cost += '<path d="M57.500 43V320" stroke="#b3b3b3"/>';
[892, 1113, 788, 952, 736, 902, 1240, 863].forEach((v, i) => {
  const top = 43 + Math.round((1400 - v) * 0.095);
  cost += rect(65 + Math.round(i * 23.700), top, 9, 320 - top, '#1f293b');
});
cost += rect(256, 114, 5, 5, '#1f293b') + text(263, 119, 'Coste mensual total', 'start');
document.getElementById('chartCoste').innerHTML = cost;
```
